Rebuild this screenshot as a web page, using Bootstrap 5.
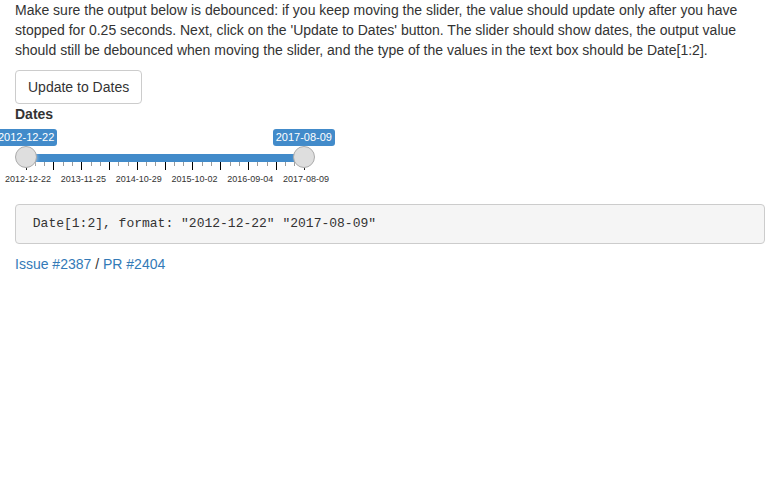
<!DOCTYPE html>
<html lang="en">
<head>
<meta charset="utf-8">
<meta name="viewport" content="width=device-width, initial-scale=1">
<title>Debounced date slider</title>
<link href="https://cdn.jsdelivr.net/npm/bootstrap@5.3.0/dist/css/bootstrap.min.css" rel="stylesheet">
<style>
  body { font: 14px/20px "Liberation Sans", Arial, sans-serif; color: #333; }
  .page { padding: 0 15px; }
  .intro, .output { margin-bottom: 10px; }
  .btn-update {
    --bs-btn-padding-x: 12px; --bs-btn-padding-y: 6px;
    --bs-btn-font-size: 14px; --bs-btn-line-height: 20px;
    --bs-btn-color: #333; --bs-btn-bg: #fff; --bs-btn-border-color: #ccc;
    --bs-btn-hover-color: #333; --bs-btn-hover-bg: #e6e6e6; --bs-btn-hover-border-color: #adadad;
    --bs-btn-border-radius: 4px;
  }
  .date-slider { max-width: 300px; margin-bottom: 19px; }
  .bubbles { margin: 5px -20px 0; }
  .bubble {
    padding: 1px 3px; border-radius: 3px;
    background: #428bca; color: #fff; font-size: 11px; line-height: 15px;
  }
  /* Both range inputs share one grid cell, over the blue bar */
  .rail { grid-template-columns: 1fr; align-items: center; height: 22px; }
  .rail > *, .rail::before { grid-area: 1 / 1; }
  .rail::before { content: ""; height: 8px; margin: 2px 11px 0; background: #428bca; }
  .handle {
    appearance: none; -webkit-appearance: none;
    width: 100%; height: 22px; margin: 0; background: none; pointer-events: none;
  }
  .handle::-webkit-slider-thumb {
    -webkit-appearance: none; pointer-events: auto; box-sizing: border-box;
    width: 22px; height: 22px; border: 1px solid #ababab; border-radius: 50%;
    background: #dedede; box-shadow: 1px 1px 3px rgba(255, 255, 255, .3);
  }
  .handle::-moz-range-thumb {
    pointer-events: auto; box-sizing: border-box;
    width: 22px; height: 22px; border: 1px solid #ababab; border-radius: 50%; background: #dedede;
  }
  .ruler { display: block; width: calc(100% - 20px); height: 8px; margin: -6px 10px 0 11px; }
  .scale { margin: 3px -14px 0 -10px; font-size: 9px; line-height: 12px; }
  .output {
    padding: 9px; border: 1px solid #ccc; border-radius: 4px; background: #f5f5f5;
    color: #333; font: 13px/20px "Liberation Mono", "Courier New", monospace;
  }
  .refs a { color: #337ab7; }
</style>
</head>
<body>
<main class="page container-fluid">
  <p class="intro">Make sure the output below is debounced: if you keep moving the slider, the value should update only after you have stopped for 0.25 seconds. Next, click on the 'Update to Dates' button. The slider should show dates, the output value should still be debounced when moving the slider, and the type of the values in the text box should be Date[1:2].</p>
  <button type="button" class="btn btn-update d-block">Update to Dates</button>
  <div class="date-slider">
    <label for="date-from" class="fw-bold d-block">Dates</label>
    <div class="bubbles d-flex justify-content-between">
      <output class="bubble" for="date-from">2012-12-22</output>
      <output class="bubble" for="date-to">2017-08-09</output>
    </div>
    <div class="rail d-grid position-relative z-1">
      <input class="handle" type="range" id="date-from" min="15696" max="17387" value="15696">
      <input class="handle" type="range" id="date-to" min="15696" max="17387" value="17387" aria-label="Dates, end">
    </div>
    <svg class="ruler" viewBox="0 0 280 8" preserveAspectRatio="none" shape-rendering="crispEdges" aria-hidden="true">
      <path stroke="#999" d="M9.5 0v4M18.5 0v4M37.5 0v4M46.5 0v4M65.5 0v4M74.5 0v4M92.5 0v4M102.5 0v4M120.5 0v4M129.5 0v4M148.5 0v4M157.5 0v4M176.5 0v4M185.5 0v4M204.5 0v4M213.5 0v4M231.5 0v4M241.5 0v4M259.5 0v4M268.5 0v4"/>
      <path stroke="#000" d="M.5 0v8M27.5 0v8M55.5 0v8M83.5 0v8M111.5 0v8M139.5 0v8M166.5 0v8M194.5 0v8M222.5 0v8M250.5 0v8M278.5 0v8"/>
    </svg>
    <div class="scale d-flex justify-content-between">
      <span>2012-12-22</span><span>2013-11-25</span><span>2014-10-29</span><span>2015-10-02</span><span>2016-09-04</span><span>2017-08-09</span>
    </div>
  </div>
  <pre class="output"> Date[1:2], format: "2012-12-22" "2017-08-09"</pre>
  <p class="refs mb-0"><a class="text-decoration-none" href="#issue-2387">Issue #2387</a> / <a class="text-decoration-none" href="#pr-2404">PR #2404</a></p>
</main>
<script src="https://cdn.jsdelivr.net/npm/bootstrap@5.3.0/dist/js/bootstrap.bundle.min.js"></script>
</body>
</html>
